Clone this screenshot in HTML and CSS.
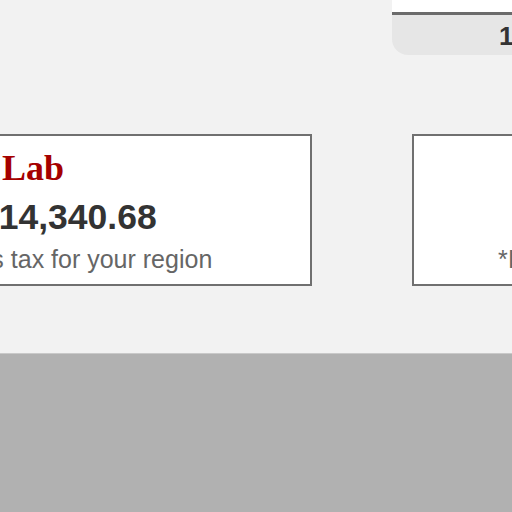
FILE: index.html
```html
<!DOCTYPE html>
<html>
<head>
<meta charset="utf-8">
<link rel="stylesheet" href="styles.css">
</head>
<body>
<div class="page">
  <div class="top">
    <div class="summary">
      <div class="summary-white"></div>
      <div class="summary-gray"><span class="count">1</span></div>
    </div>
  </div>
  <div class="cards">
    <div class="card card-left">
      <div class="title">Lab</div>
      <div class="price">$14,340.68</div>
      <div class="note">*Includes tax for your region</div>
    </div>
    <div class="card card-right">
      <div class="title"></div>
      <div class="price"></div>
      <div class="note">*Includes tax for your region</div>
    </div>
  </div>
  <div class="footer"></div>
</div>
</body>
</html>
```
FILE: styles.css
```css
html, body {
  margin: 0;
  padding: 0;
}
body {
  width: 512px;
  height: 512px;
  overflow: hidden;
  background: #f2f2f2;
  font-family: "Liberation Sans", Arial, sans-serif;
}
.page {
  width: 512px;
  height: 512px;
  display: flex;
  flex-direction: column;
  overflow: hidden;
}
.top {
  height: 55px;
  display: flex;
  flex-shrink: 0;
}
.summary {
  margin-left: 392px;
  width: 200px;
  flex-shrink: 0;
  display: flex;
  flex-direction: column;
}
.summary-white {
  height: 12px;
  background: #ffffff;
}
.summary-gray {
  height: 40px;
  background: #e6e6e6;
  border-top: 3px solid #6b6b6b;
  border-bottom-left-radius: 16px;
  display: flex;
  align-items: center;
  padding-left: 107px;
}
.count {
  font-weight: bold;
  font-size: 26px;
  color: #333333;
  line-height: 1;
  margin-top: 2px;
}
.cards {
  margin-top: 79px;
  display: flex;
  gap: 100px;
  flex-shrink: 0;
}
.card {
  flex-shrink: 0;
  width: 495px;
  height: 152px;
  box-sizing: border-box;
  background: #ffffff;
  border: 2px solid #707070;
  display: flex;
  flex-direction: column;
  align-items: flex-start;
}
.card-left {
  margin-left: -183px;
}
.title {
  font-family: "Liberation Serif", "Times New Roman", serif;
  font-weight: bold;
  font-size: 36px;
  color: #a50000;
  line-height: 44px;
  height: 44px;
  margin-top: 10px;
  margin-left: 183px;
  white-space: nowrap;
}
.price {
  font-weight: bold;
  font-size: 35.5px;
  color: #333333;
  line-height: 44px;
  height: 44px;
  margin-top: 5px;
  margin-left: 160px;
  white-space: nowrap;
}
.note {
  font-size: 25px;
  color: #666666;
  line-height: 30px;
  margin-top: 5px;
  margin-left: 82px;
  white-space: nowrap;
}
.card-right .note {
  margin-left: 84px;
}
.footer {
  margin-top: 67px;
  flex: 1;
  background: #b1b1b1;
  border-top: 1px solid #c9c9c9;
}
```
